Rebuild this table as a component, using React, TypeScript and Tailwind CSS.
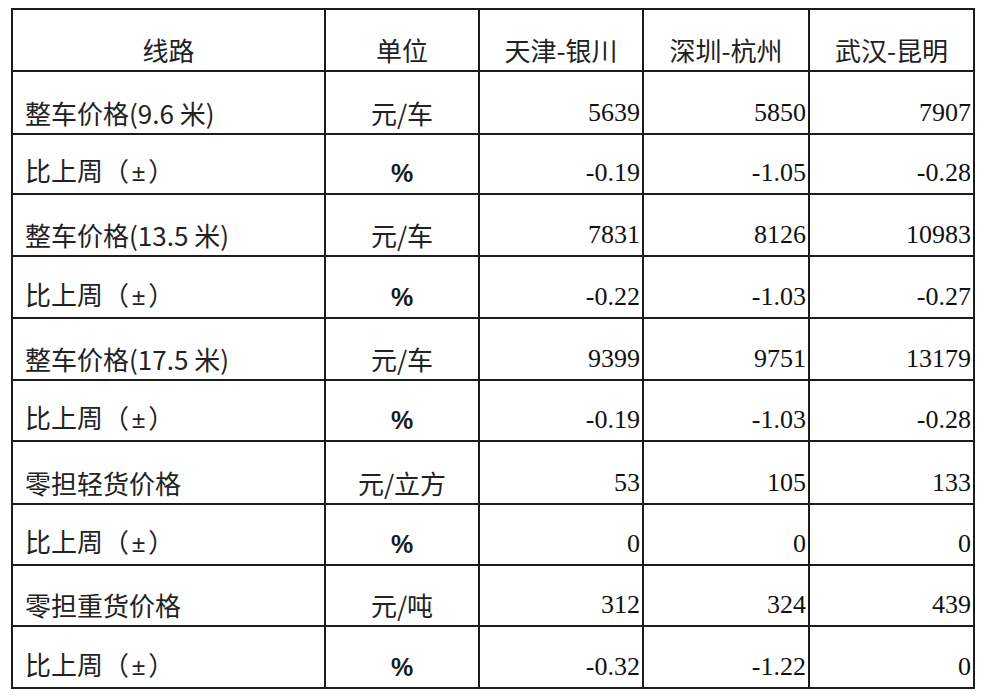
import React from "react";

const rows: { name: string; unit: string; vals: string[] }[] = [
  { name: "整车价格(9.6 米)", unit: "元/车", vals: ["5639", "5850", "7907"] },
  { name: "pm", unit: "%", vals: ["-0.19", "-1.05", "-0.28"] },
  { name: "整车价格(13.5 米)", unit: "元/车", vals: ["7831", "8126", "10983"] },
  { name: "pm", unit: "%", vals: ["-0.22", "-1.03", "-0.27"] },
  { name: "整车价格(17.5 米)", unit: "元/车", vals: ["9399", "9751", "13179"] },
  { name: "pm", unit: "%", vals: ["-0.19", "-1.03", "-0.28"] },
  { name: "零担轻货价格", unit: "元/立方", vals: ["53", "105", "133"] },
  { name: "pm", unit: "%", vals: ["0", "0", "0"] },
  { name: "零担重货价格", unit: "元/吨", vals: ["312", "324", "439"] },
  { name: "pm", unit: "%", vals: ["-0.32", "-1.22", "0"] },
];

const cell =
  "flex items-end border-r-2 border-b-2 border-[#1c1c1c] pb-[5px] leading-[30px] overflow-hidden whitespace-nowrap";
const cjk = "font-['Noto_Sans_CJK_SC',sans-serif] text-[26px] text-[#222]";
const num = "font-['Liberation_Serif',serif] text-[26px] text-[#111]";

function Name({ name }: { name: string }) {
  if (name === "pm") {
    return (
      <span>
        比上周（<span className="font-['Liberation_Sans',sans-serif] text-[24px] px-[3px]">±</span>）
      </span>
    );
  }
  return <span>{name}</span>;
}

export default function App() {
  return (
    <div className="w-[987px] h-[697px] bg-white pt-[8px] pl-[11px]">
      <div className="grid w-[964px] grid-cols-[313px_154px_164px_166px_165px] grid-rows-[62px_63px_60px_62px_62px_62px_61px_63px_61px_61px_62px] border-l-2 border-t-2 border-[#1c1c1c]">
        <div className={`${cell} ${cjk} justify-center`}>线路</div>
        <div className={`${cell} ${cjk} justify-center`}>单位</div>
        <div className={`${cell} ${cjk} justify-center`}>天津-银川</div>
        <div className={`${cell} ${cjk} justify-center`}>深圳-杭州</div>
        <div className={`${cell} ${cjk} justify-center`}>武汉-昆明</div>
        {rows.map((r, i) => (
          <React.Fragment key={i}>
            <div className={`${cell} ${cjk} pl-[12px]`}>
              <Name name={r.name} />
            </div>
            {r.unit === "%" ? (
              <div className={`${cell} justify-center font-['Liberation_Sans',sans-serif] font-bold text-[25px] text-[#1a1a1a]`}>
                %
              </div>
            ) : (
              <div className={`${cell} ${cjk} justify-center`}>{r.unit}</div>
            )}
            {r.vals.map((v, j) => (
              <div key={j} className={`${cell} ${num} justify-end pr-[2px]`}>
                {v}
              </div>
            ))}
          </React.Fragment>
        ))}
      </div>
    </div>
  );
}
